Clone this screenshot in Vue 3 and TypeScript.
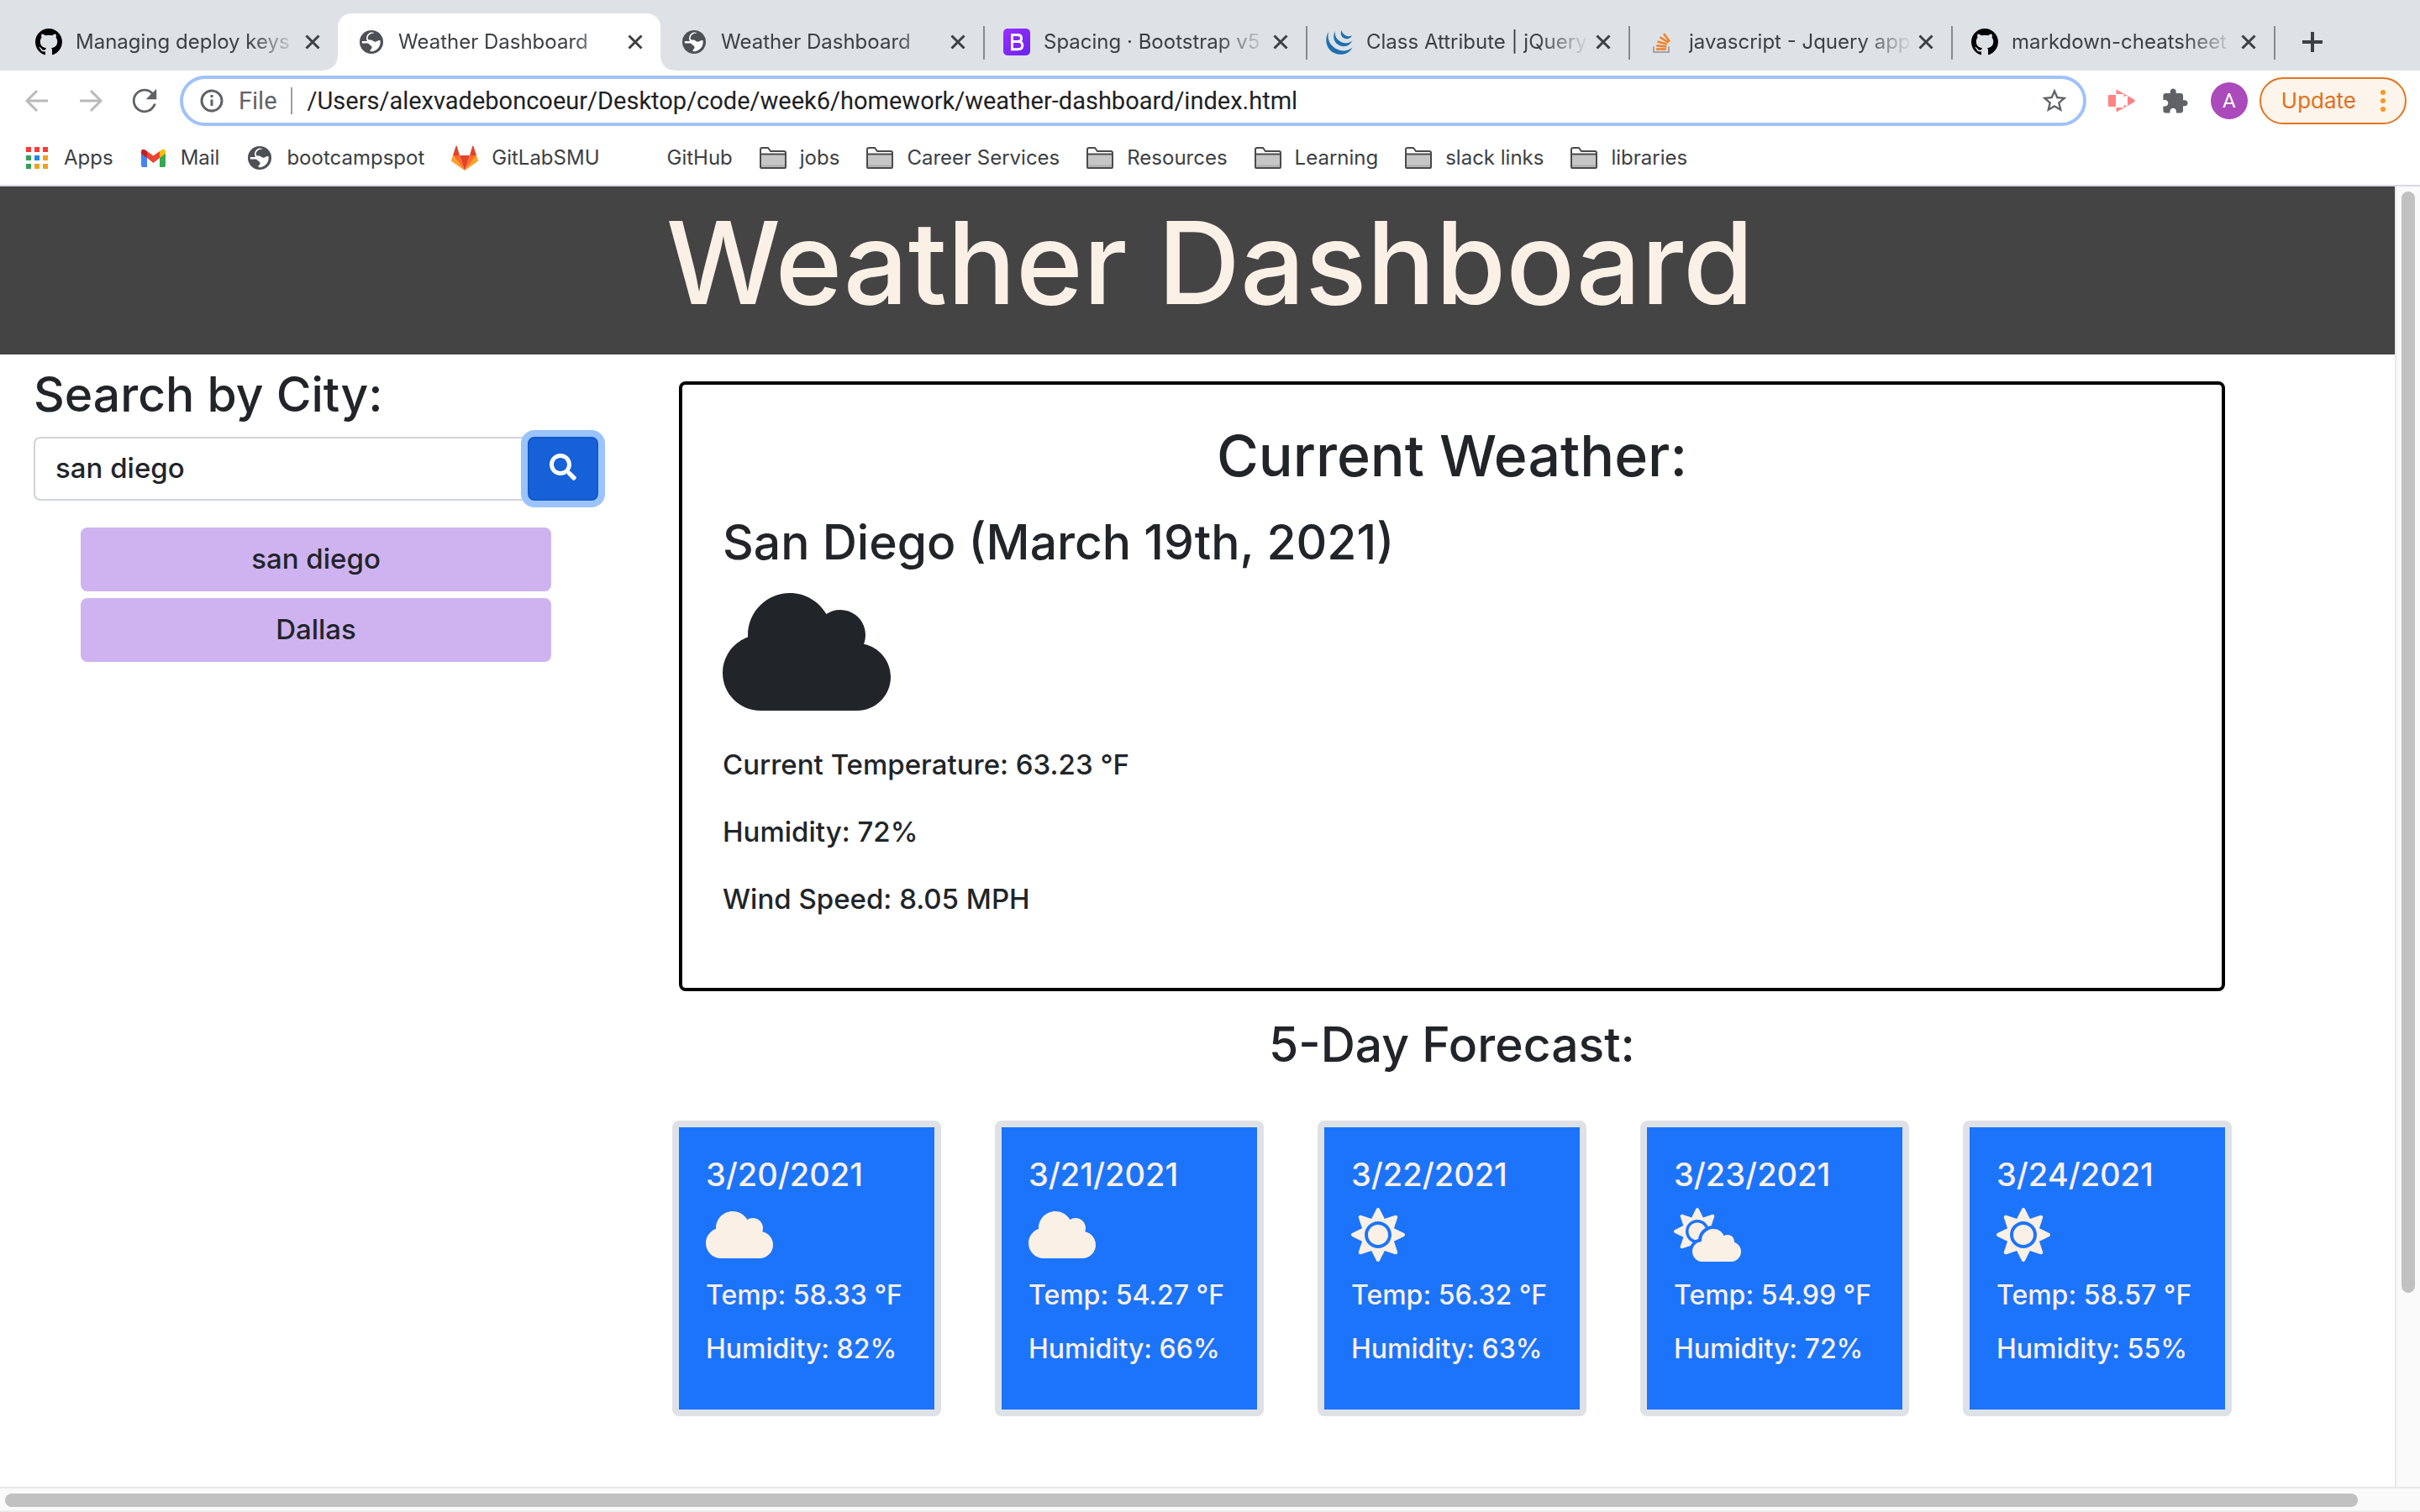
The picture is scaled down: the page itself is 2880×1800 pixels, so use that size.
<script setup lang="ts">
import { ref } from 'vue'

type TabIcon = 'github' | 'globe' | 'bootstrap' | 'jquery' | 'stack'
type WeatherIcon = 'cloud' | 'sun' | 'cloud-sun'
type BookmarkIcon = 'apps' | 'mail' | 'globe' | 'gitlab' | 'none' | 'folder'

interface Tab { title: string; icon: TabIcon; active?: boolean; line?: boolean }
interface Bookmark { label: string; icon: BookmarkIcon }
interface Day { date: string; icon: WeatherIcon; temp: string; humidity: number }

const tabs: Tab[] = [
  { title: 'Managing deploy keys', icon: 'github' },
  { title: 'Weather Dashboard', icon: 'globe', active: true },
  { title: 'Weather Dashboard', icon: 'globe', line: true },
  { title: 'Spacing · Bootstrap v5', icon: 'bootstrap', line: true },
  { title: 'Class Attribute | jQuery', icon: 'jquery', line: true },
  { title: 'javascript - Jquery app', icon: 'stack', line: true },
  { title: 'markdown-cheatsheet', icon: 'github', line: true },
]

const bookmarks: Bookmark[] = [
  { label: 'Apps', icon: 'apps' },
  { label: 'Mail', icon: 'mail' },
  { label: 'bootcampspot', icon: 'globe' },
  { label: 'GitLabSMU', icon: 'gitlab' },
  { label: 'GitHub', icon: 'none' },
  { label: 'jobs', icon: 'folder' },
  { label: 'Career Services', icon: 'folder' },
  { label: 'Resources', icon: 'folder' },
  { label: 'Learning', icon: 'folder' },
  { label: 'slack links', icon: 'folder' },
  { label: 'libraries', icon: 'folder' },
]

const forecast: Day[] = [
  { date: '3/20/2021', icon: 'cloud', temp: '58.33', humidity: 82 },
  { date: '3/21/2021', icon: 'cloud', temp: '54.27', humidity: 66 },
  { date: '3/22/2021', icon: 'sun', temp: '56.32', humidity: 63 },
  { date: '3/23/2021', icon: 'cloud-sun', temp: '54.99', humidity: 72 },
  { date: '3/24/2021', icon: 'sun', temp: '58.57', humidity: 55 },
]

const address = ref('/Users/alexvadeboncoeur/Desktop/code/week6/homework/weather-dashboard/index.html')
const city = ref('san diego')
const searched = ref(['san diego', 'Dallas'])

const weatherBox: Record<WeatherIcon, string> = {
  cloud: '0 0 640 512',
  sun: '0 0 512 512',
  'cloud-sun': '0 0 640 512',
}
const weatherPath: Record<WeatherIcon, string> = {
  cloud: 'M537.6 226.6c4.1-10.7 6.4-22.4 6.4-34.6 0-53-43-96-96-96-19.7 0-38.1 6-53.3 16.2C367 64.2 315.3 32 256 32c-88.4 0-160 71.6-160 160 0 2.7.1 5.4.2 8.1C40.2 219.8 0 273.2 0 336c0 79.5 64.5 144 144 144h368c70.7 0 128-57.3 128-128 0-61.9-44-113.6-102.4-125.4z',
  sun: 'M256 160c-52.9 0-96 43.1-96 96s43.1 96 96 96 96-43.1 96-96-43.1-96-96-96zm246.4 80.5l-94.7-47.3 33.5-100.4c4.5-13.6-8.4-26.5-21.9-21.9l-100.4 33.5-47.4-94.8c-6.4-12.8-24.6-12.8-31 0l-47.3 94.7L92.7 70.8c-13.6-4.5-26.5 8.4-21.9 21.9l33.5 100.4-94.7 47.4c-12.8 6.4-12.8 24.6 0 31l94.7 47.3-33.5 100.5c-4.5 13.6 8.4 26.5 21.9 21.9l100.4-33.5 47.3 94.7c6.4 12.8 24.6 12.8 31 0l47.3-94.7 100.4 33.5c13.6 4.5 26.5-8.4 21.9-21.9l-33.5-100.4 94.7-47.3c13-6.5 13-24.7.2-31.1zm-155.9 106c-49.9 49.9-131.1 49.9-181 0-49.9-49.9-49.9-131.1 0-181 49.9-49.9 131.1-49.9 181 0 49.9 49.9 49.9 131.1 0 181z',
  'cloud-sun': 'M575.2 325.7c.2-1.9.8-3.7.8-5.6 0-35.3-28.7-64-64-64-12.6 0-24.2 3.8-34.1 10-17.6-38.8-56.5-66-101.9-66-61.8 0-112 50.1-112 112 0 3 .7 5.8.9 8.7-49.6 3.7-88.9 44.7-88.9 95.3 0 53 43 96 96 96h272c53 0 96-43 96-96 0-42.1-27.2-77.4-64.8-90.4zm-430.4-22.6c-43.7-43.7-43.7-114.7 0-158.3 43.7-43.7 114.7-43.7 158.4 0 9.7 9.7 16.9 20.9 22.3 32.7 9.8-3.7 20.1-6 30.7-7.5L386 81.1c4-11.9-7.3-23.1-19.2-19.2L279 91.2 237.5 8.4C232-2.8 216-2.8 210.4 8.4L169 91.2 81.1 61.9C69.3 58 58 69.3 61.9 81.1l29.3 87.8-82.8 41.5c-11.2 5.6-11.2 21.5 0 27.1l82.8 41.4-29.3 87.8c-4 11.9 7.3 23.1 19.1 19.2l76.1-25.3c6.1-12.4 14-23.7 23.6-33.5-13.1-5.4-25.4-13.4-36-24zm-4.8-79.2c0 40.8 29.3 74.8 67.9 82.3 8-4.7 16.3-8.8 25.2-11.7 5.4-44.3 31-82.5 67.4-105C287.3 160.4 258 140 224 140c-46.3 0-84 37.6-84 83.9z',
}
const githubPath = 'M8 0C3.58 0 0 3.58 0 8c0 3.54 2.29 6.53 5.47 7.59.4.07.55-.17.55-.38 0-.19-.01-.82-.01-1.49-2.01.37-2.53-.49-2.69-.94-.09-.23-.48-.94-.82-1.13-.28-.15-.68-.52-.01-.53.63-.01 1.08.58 1.23.82.72 1.21 1.87.87 2.33.66.07-.52.28-.87.51-1.07-1.78-.2-3.64-.89-3.64-3.95 0-.87.31-1.59.82-2.15-.08-.2-.36-1.02.08-2.12 0 0 .67-.21 2.2.82.64-.18 1.32-.27 2-.27s1.36.09 2 .27c1.53-1.04 2.2-.82 2.2-.82.44 1.1.16 1.92.08 2.12.51.56.82 1.27.82 2.15 0 3.07-1.87 3.75-3.65 3.95.29.25.54.73.54 1.48 0 1.07-.01 1.93-.01 2.2 0 .21.15.46.55.38A8.01 8.01 0 0 0 16 8c0-4.42-3.58-8-8-8z'
const globeLand = 'M19.5 5.5C16 5 13 7 12 9.5C11 12 12 13.8 14.500 13.5C17 13.2 17.5 14.8 19.5 15.5C22 16.5 22.5 13.5 26.5 14C27.5 20 24 26 17 27.2C14.5 27.5 13.5 26 15.5 24.5C17 23.5 17 21 15 20C13 19 13 17 10.5 17.5H4.8V15H11C9 12 10 7 14 5C16 4.2 18.5 4.5 19.5 5.5Z'
const globeSea = 'M19.5 5.5C18 8 21 9.5 18.5 11C16.5 12 18 14.5 20 15C23 15.5 23 13 26.8 14A11.5 11.5 0 0 0 19.5 5.5Z'
</script>

<template>
  <div class="window">
    <nav class="tabs" aria-label="Tabs">
      <div v-for="(tab, i) in tabs" :key="i" class="tab" :class="{ active: tab.active, line: tab.line }">
        <svg v-if="tab.icon === 'github'" class="icon" viewBox="0 0 16 16"><path :d="githubPath" /></svg>
        <svg v-else-if="tab.icon === 'globe'" class="icon" viewBox="0 0 32 32">
          <circle cx="16" cy="16" r="14" fill="#4d5156" />
          <path :d="globeLand" fill="#fff" />
          <path :d="globeSea" fill="#4d5156" />
        </svg>
        <svg v-else-if="tab.icon === 'bootstrap'" class="icon" viewBox="0 0 32 32">
          <defs><linearGradient id="bs" x1="0" y1="0" x2="1" y2="1"><stop offset="0" stop-color="#9a2fff" /><stop offset="1" stop-color="#6a22ea" /></linearGradient></defs>
          <rect width="32" height="32" rx="5" fill="url(#bs)" />
          <path d="M10.500 7.500H17C20 7.500 21.600 9 21.600 11.500S20 15.200 18 15.500C21 15.700 22.800 17.300 22.800 20C22.800 23 20.600 24.700 17.200 24.700H10.500Z" fill="none" stroke="#fff" stroke-width="3" />
          <path d="M10.500 15.500H18" stroke="#fff" stroke-width="3" />
        </svg>
        <svg v-else-if="tab.icon === 'jquery'" class="icon" viewBox="0 0 32 32" fill="#1f6fb0">
          <path d="M3 4C-3 14 1 28 14 30.500C22 32 29 28 31.500 22.500C26 27 19 27.500 13 24.500C5 20.500 1 13 3 4Z" />
          <path d="M11 3C7 10 10 18 17 20.500C23 22.500 29 20 31 14.500C27 18 22 18 18 16C12.500 13 10 8.500 11 3Z" />
          <path d="M18.500 2C16.500 7 19 11 23 12C27 13 30 11 31 8C28.500 9.800 25.500 9.500 23 8C20.500 6.500 19 4.500 18.500 2Z" />
        </svg>
        <svg v-else class="icon" viewBox="0 0 32 32" fill="none">
          <path d="M6 21.500V28H24V21.500" stroke="#9ea4ab" stroke-width="2" />
          <path d="M9 24.500H21M9.300 20.200L21.200 21.400M10.500 15.500L22 18.600M13.500 10.300L23.500 16.500M18 6L25 15.500" stroke="#f48024" stroke-width="2.500" />
        </svg>
        <span class="tab-title">{{ tab.title }}</span>
        <button class="flat close" type="button" aria-label="Close tab">
          <svg viewBox="0 0 32 32"><path d="M8.500 8.500L23.500 23.500M23.500 8.500L8.500 23.500" /></svg>
        </button>
      </div>
      <button class="flat add" type="button" aria-label="New tab">
        <svg viewBox="0 0 32 32"><path d="M16 4V28M4 16H28" /></svg>
      </button>
    </nav>

    <div class="toolbar">
      <div class="nav-buttons">
        <button class="flat" type="button" aria-label="Back">
          <svg viewBox="0 0 32 32" class="arrow"><path d="M29 16H5M16 4L4 16L16 28" /></svg>
        </button>
        <button class="flat" type="button" aria-label="Forward">
          <svg viewBox="0 0 32 32" class="arrow"><path d="M3 16H27M16 4L28 16L16 28" /></svg>
        </button>
        <button class="flat" type="button" aria-label="Reload">
          <svg viewBox="3 3 18 18" fill="#5f6368"><path d="M17.650 6.350C16.200 4.900 14.210 4 12 4c-4.420 0-7.990 3.580-7.990 8s3.570 8 7.990 8c3.730 0 6.840-2.550 7.730-6h-1.700c-.82 2.330-3.040 4.400-6.030 4.400-3.310 0-6.400-2.890-6.400-6.400s2.890-6.400 6.400-6.400c1.660 0 3.340.69 4.420 1.780L13 11h7V4l-2.350 2.350z" /></svg>
        </button>
      </div>
      <div class="omnibox">
        <svg class="icon" viewBox="0 0 32 32" fill="none" stroke="#5f6368" stroke-width="3">
          <circle cx="16" cy="16" r="12" /><path d="M16 14.500V22M16 9V12" />
        </svg>
        <span class="scheme">File</span>
        <input v-model="address" class="address" type="text" aria-label="Address" spellcheck="false" />
        <button class="flat" type="button" aria-label="Bookmark this page">
          <svg viewBox="1 1 22 22" fill="#5f6368"><path d="M22 9.240l-7.190-.62L12 2 9.190 8.630 2 9.240l5.460 4.730L5.820 21 12 17.270 18.180 21l-1.630-7.030L22 9.240zM12 15.400l-3.760 2.270 1-4.280-3.320-2.880 4.380-.38L12 6.100l1.710 4.040 4.380.38-3.320 2.880 1 4.280L12 15.400z" /></svg>
        </button>
      </div>
      <div class="actions">
        <button class="flat" type="button" aria-label="Screen recorder">
          <svg viewBox="0 0 32 32" fill="#ff8383">
            <path d="M1 9H9V23H1Q0 23 0 22V10Q0 9 1 9Z" />
            <path fill-rule="evenodd" d="M9.500 2.500L31 14.500Q32.500 16 31 17.500L9.500 29.500V24H18.500V20.500L23 23V9L18.500 11.500V8H9.500Z" />
          </svg>
        </button>
        <button class="flat" type="button" aria-label="Extensions">
          <svg viewBox="1 0 23 23" fill="#5f6368"><path d="M20.500 11H19V7c0-1.100-.9-2-2-2h-4V3.500C13 2.120 11.880 1 10.500 1S8 2.120 8 3.500V5H4c-1.100 0-1.990.9-1.990 2v3.800H3.500c1.490 0 2.700 1.210 2.700 2.700s-1.210 2.700-2.700 2.700H2V20c0 1.100.9 2 2 2h3.800v-1.500c0-1.490 1.210-2.700 2.700-2.700 1.490 0 2.700 1.210 2.700 2.700V22H17c1.100 0 2-.9 2-2v-4h1.500c1.380 0 2.500-1.120 2.500-2.500S21.880 11 20.500 11z" /></svg>
        </button>
        <button class="avatar" type="button" aria-label="Profile">A</button>
        <button class="update" type="button">
          Update
          <svg viewBox="0 0 8 32" aria-hidden="true"><circle cx="4" cy="6" r="3" /><circle cx="4" cy="16" r="3" /><circle cx="4" cy="26" r="3" /></svg>
        </button>
      </div>
    </div>

    <nav class="bookmarks" aria-label="Bookmarks">
      <a v-for="mark in bookmarks" :key="mark.label" class="bookmark" href="#">
        <svg v-if="mark.icon === 'apps'" class="icon" viewBox="0 0 32 32">
          <path d="M3 3h6v6H3zM13 3h6v6h-6zM23 3h6v6h-6z" fill="#f93a37" />
          <path d="M3 13h6v6H3zM3 23h6v6H3z" fill="#369f5a" />
          <path d="M13 13h6v6h-6z" fill="#1e88ee" />
          <path d="M23 13h6v6h-6zM13 23h6v6h-6zM23 23h6v6h-6z" fill="#f0a126" />
        </svg>
        <svg v-else-if="mark.icon === 'mail'" class="icon" viewBox="0 0 32 32">
          <path d="M1 9L8 14V27H3Q1 27 1 25Z" fill="#4285f4" />
          <path d="M30 9L23 14V27H28Q30 27 30 25Z" fill="#34a853" />
          <path d="M23 8L26 6Q30 5 30 9V11L23 16Z" fill="#fbbc04" />
          <path d="M8 8L15.500 13.500L23 8V16L15.500 22L8 16Z" fill="#ea4335" />
          <path d="M1 11V9Q1 5 5 6L8 8V16Z" fill="#c5221f" />
        </svg>
        <svg v-else-if="mark.icon === 'globe'" class="icon" viewBox="0 0 32 32">
          <circle cx="16" cy="16" r="14" fill="#4d5156" />
          <path :d="globeLand" fill="#fff" />
          <path :d="globeSea" fill="#4d5156" />
        </svg>
        <svg v-else-if="mark.icon === 'gitlab'" class="icon" viewBox="0 0 32 32">
          <path d="M2 13L0 18.500Q0 20 1 20.500L16 31Z" fill="#fca326" />
          <path d="M30 13L32 18.500Q32 20 31 20.500L16 31Z" fill="#fca326" />
          <path d="M2 13H10L16 31ZM30 13H22L16 31Z" fill="#fc6d26" />
          <path d="M10 13H22L16 31ZM2 13L5.500 2Q6.200 1 6.800 2L10 13ZM30 13L26.500 2Q25.800 1 25.200 2L22 13Z" fill="#e24329" />
        </svg>
        <svg v-else-if="mark.icon === 'folder'" class="icon" viewBox="0 0 32 32">
          <path d="M1 27V6Q1 4 3 4H10L13 8H29Q31 8 31 10V27Q31 28 30 28H2Q1 28 1 27Z" fill="#fff" stroke="#4a4a4a" stroke-width="2" />
          <path d="M2 12H30V27H2Z" fill="#c6c6c6" /><path d="M2 25.500H30" stroke="#aeaeae" stroke-width="2" /><path d="M1 11.500H31" stroke="#4a4a4a" stroke-width="2" />
        </svg>
        <span v-else class="icon"></span>
        {{ mark.label }}
      </a>
    </nav>

    <div class="viewport">
      <div class="clip">
        <div class="page">
          <header class="banner"><h1>Weather Dashboard</h1></header>
          <div class="row">
            <aside class="search">
              <h2><label for="city">Search by City:</label></h2>
              <form class="search-group" @submit.prevent>
                <input id="city" v-model="city" type="text" />
                <button type="submit" aria-label="Search">
                  <svg viewBox="0 0 512 512" fill="#fff"><path d="M505 442.700L405.300 343c-4.500-4.500-10.600-7-17-7H372c27.600-35.300 44-79.700 44-128C416 93.100 322.900 0 208 0S0 93.100 0 208s93.100 208 208 208c48.300 0 92.700-16.400 128-44v16.300c0 6.400 2.500 12.500 7 17l99.700 99.700c9.400 9.400 24.600 9.400 33.900 0l28.300-28.300c9.400-9.400 9.400-24.600.1-34zM208 336c-70.700 0-128-57.200-128-128 0-70.700 57.200-128 128-128 70.700 0 128 57.200 128 128 0 70.700-57.200 128-128 128z" /></svg>
                </button>
              </form>
              <div class="history">
                <button v-for="name in searched" :key="name" type="button">{{ name }}</button>
              </div>
            </aside>
            <main class="results">
              <section class="current">
                <h2>Current Weather:</h2>
                <h3>San Diego (March 19th, 2021)</h3>
                <svg class="now" :viewBox="weatherBox.cloud"><path :d="weatherPath.cloud" /></svg>
                <p>Current Temperature: 63.23 °F</p>
                <p>Humidity: 72%</p>
                <p>Wind Speed: 8.05 MPH</p>
              </section>
              <h2 class="forecast-title">5-Day Forecast:</h2>
              <section class="forecast">
                <article v-for="day in forecast" :key="day.date" class="day">
                  <h3>{{ day.date }}</h3>
                  <svg :viewBox="weatherBox[day.icon]"><path :d="weatherPath[day.icon]" /></svg>
                  <p>Temp: {{ day.temp }} °F</p>
                  <p>Humidity: {{ day.humidity }}%</p>
                </article>
              </section>
            </main>
          </div>
        </div>
      </div>
      <div class="track vertical"><div class="thumb"></div></div>
      <div class="track horizontal"><div class="thumb"></div></div>
    </div>
  </div>
</template>

<style>
body {
  background: #fff;
}
</style>

<style scoped>
* {
  box-sizing: border-box;
}
.window {
  display: flex;
  flex-direction: column;
  min-height: 100vh;
  background: #fff;
  color: #3c4043;
  font: 24px/32px Inter, "Liberation Sans", sans-serif;
}
.icon {
  flex: none;
  display: block;
  width: 32px;
  height: 32px;
}
.flat {
  flex: none;
  width: 32px;
  height: 32px;
  padding: 0;
  border: 0;
  background: none;
}
.flat svg {
  display: block;
  width: 32px;
  height: 32px;
}

/* Tab strip */
.tabs {
  display: flex;
  height: 84px;
  padding: 16px 0 0 18px;
  background: #dee1e6;
}
.tab {
  position: relative;
  display: flex;
  flex: 0 1 384px;
  align-items: center;
  min-width: 0;
  padding: 0 14px 0 24px;
}
.tab.active {
  border-radius: 16px 16px 0 0;
  background: #fff;
}
.tab.active::before,
.tab.active::after {
  content: "";
  position: absolute;
  bottom: 0;
  width: 16px;
  height: 16px;
}
.tab.active::before {
  right: 100%;
  background: radial-gradient(circle at 0 0, transparent 15px, #fff 16px);
}
.tab.active::after {
  left: 100%;
  background: radial-gradient(circle at 100% 0, transparent 15px, #fff 16px);
}
.tab.line::after {
  content: "";
  position: absolute;
  top: 15px;
  right: -2px;
  width: 2px;
  height: 40px;
  background: #86898d;
}
.tab-title {
  flex: 1;
  margin-left: 16px;
  overflow: hidden;
  white-space: nowrap;
  mask-image: linear-gradient(to right, #000 calc(100% - 60px), transparent);
}
.close path,
.add path {
  fill: none;
  stroke: #3c4043;
  stroke-width: 3;
}
.add {
  align-self: center;
  margin-left: 30px;
}
.add path {
  stroke-width: 4;
}

/* Toolbar */
.toolbar {
  display: flex;
  align-items: center;
  height: 72px;
  padding: 0 16px 0 28px;
}
.nav-buttons {
  display: flex;
  gap: 32px;
  margin-right: 26px;
}
.arrow {
  fill: none;
  stroke: #bababa;
  stroke-width: 3;
}
.omnibox {
  display: flex;
  flex: 1;
  align-items: center;
  height: 60px;
  padding: 0 18px;
  border: 4px solid #a0c2fa;
  border-radius: 30px;
  font-size: 29px;
  font-family: Roboto, Inter, sans-serif;
}
.scheme {
  margin: 0 18px 0 16px;
  padding-right: 16px;
  border-right: 2px solid #9a9da1;
  color: #5f6368;
}
.address {
  flex: 1;
  min-width: 0;
  padding: 0;
  border: 0;
  outline: 0;
  background: none;
  color: #202124;
  font: inherit;
}
.actions {
  display: flex;
  align-items: center;
  margin-left: 26px;
}
.actions .flat {
  margin-right: 32px;
}
.avatar {
  width: 44px;
  height: 44px;
  margin: 0 14px 0 -6px;
  padding: 0;
  border: 0;
  border-radius: 50%;
  background: #ab4aba;
  color: #fff;
  font: 24px/44px Roboto, sans-serif;
}
.update {
  display: flex;
  align-items: center;
  gap: 28px;
  height: 56px;
  padding: 0 22px 0 24px;
  border: 2px solid #e37520;
  border-radius: 28px;
  background: #fdf4eb;
  color: #e0701c;
  font: 26px/32px Inter, sans-serif;
}
.update svg {
  width: 8px;
  height: 32px;
  fill: #f7981d;
}

/* Bookmarks */
.bookmarks {
  display: flex;
  align-items: center;
  gap: 32px;
  height: 66px;
  padding: 0 28px;
  border-bottom: 2px solid #d8dae4;
}
.bookmark {
  display: flex;
  align-items: center;
  gap: 16px;
  color: #3c4043;
  text-decoration: none;
  white-space: nowrap;
}

/* Page */
.viewport {
  display: grid;
  flex: 1;
  grid-template-columns: minmax(0, 1fr) 30px;
  grid-template-rows: 1fr 30px;
}
.clip {
  overflow: hidden;
}
.page {
  width: calc(100% + 30px);
  color: #212529;
  font: 500 33px/48px Inter, "Liberation Sans", sans-serif;
}
h1,
h2,
h3,
p {
  margin: 0;
  font-weight: 500;
}
h2,
h3 {
  font-size: 57px;
  line-height: 68px;
}
.banner {
  height: 200px;
  padding-top: 14px;
  background: #444;
  color: linen;
  text-align: center;
}
.banner h1 {
  font-size: 136px;
  line-height: 154px;
}
.row {
  display: grid;
  grid-template-columns: 25% minmax(0, 1fr);
}
.search {
  padding: 14px 8px 0 40px;
}
.search-group {
  display: flex;
  margin-top: 16px;
}
.search-group input {
  flex: 1;
  min-width: 0;
  height: 76px;
  padding: 0 24px 2px;
  border: 2px solid #ced4da;
  border-right: 0;
  border-radius: 8px 0 0 8px;
  background: #fff;
  color: inherit;
  font: inherit;
}
.search-group button {
  width: 84px;
  height: 76px;
  padding: 0;
  border: 2px solid #1259c8;
  border-radius: 8px;
  background: #1661d8;
  box-shadow: 0 0 0 8px #9bc3fd;
}
.search-group svg {
  display: block;
  width: 32px;
  height: 32px;
  margin: 0 auto 4px;
}
.history {
  display: grid;
  gap: 8px;
  margin: 32px 56px 0;
}
.history button {
  height: 76px;
  padding: 0 0 2px;
  border: 0;
  border-radius: 8px;
  background: #cfb3f0;
  color: inherit;
  font: inherit;
}
.results {
  padding: 32px 224px 84px 80px;
}
.current {
  margin: 0 8px;
  padding: 46px 48px 82px;
  border: 4px solid #000;
  border-radius: 8px;
}
.current h2 {
  font-size: 68px;
  line-height: 76px;
  text-align: center;
}
.current h3 {
  margin: 32px 0 16px;
}
.now {
  display: block;
  width: 200px;
  height: 160px;
  margin-bottom: 30px;
  fill: #212529;
}
.current p + p {
  margin-top: 32px;
}
.forecast-title {
  margin: 30px 0 56px;
  text-align: center;
}
.forecast {
  display: grid;
  grid-template-columns: repeat(5, minmax(0, 1fr));
  gap: 64px;
}
.day {
  padding: 32px 0 48px 32px;
  border: 8px solid #dee2e6;
  border-radius: 8px;
  background: #1c74fa;
  color: linen;
  font-size: 32px;
  white-space: nowrap;
}
.day h3 {
  font-size: 38px;
  line-height: 48px;
}
.day svg {
  display: block;
  height: 64px;
  margin: 16px 0;
  fill: linen;
}
.day p + p {
  margin-top: 16px;
}

/* Scrollbars */
.track {
  background: #fafafa;
}
.vertical {
  padding: 6px 6px 0;
  border-left: 2px solid #e8e8e8;
}
.vertical .thumb {
  width: 16px;
  height: 85%;
}
.horizontal {
  grid-column: 1 / -1;
  padding: 6px 74px 6px 6px;
  border-top: 2px solid #e8e8e8;
  border-bottom: 2px solid #ededed;
}
.horizontal .thumb {
  height: 16px;
}
.thumb {
  border-radius: 8px;
  background: #c1c1c1;
}
</style>
